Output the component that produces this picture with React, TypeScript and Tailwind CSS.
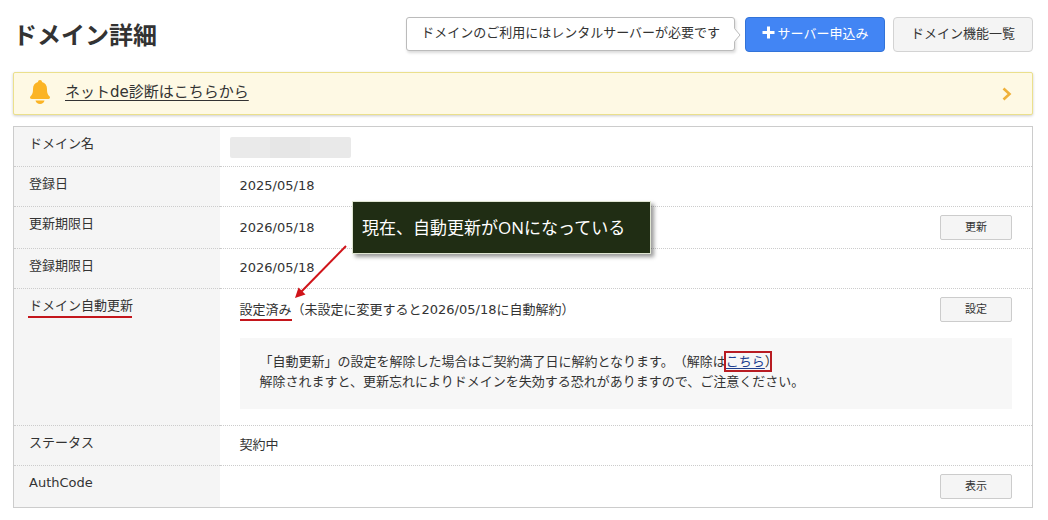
import type { ReactNode } from "react";

type Row = {
  label: string;
  value: ReactNode;
  action?: string;
  marked?: boolean;
  note?: ReactNode;
};

const rows: Row[] = [
  { label: "ドメイン名", value: <MaskedName /> },
  { label: "登録日", value: "2025/05/18" },
  { label: "更新期限日", value: "2026/05/18", action: "更新" },
  { label: "登録期限日", value: "2026/05/18" },
  {
    label: "ドメイン自動更新",
    marked: true,
    value: (
      <>
        <span className="relative after:absolute after:inset-x-0 after:-bottom-1 after:h-0.5 after:bg-[#c4161c]">設定済み</span>
        （未設定に変更すると2026/05/18に自動解約）
      </>
    ),
    action: "設定",
    note: <RenewalNote />,
  },
  { label: "ステータス", value: "契約中" },
  { label: "AuthCode", value: "", action: "表示" },
];

export default function App() {
  return (
    <main className="pl-[13px] pr-[15px] pt-[17px] pb-3 bg-white text-[#333] text-[13px] leading-5 font-['DejaVu_Sans','Noto_Sans_CJK_JP',sans-serif] [text-spacing-trim:space-all]">
      <PageHeader />
      <Notice />
      <div className="relative mt-[11px]">
        <DomainTable />
        <Callout />
      </div>
    </main>
  );
}

function PageHeader() {
  return (
    <header className="flex items-start justify-between">
      <h1 className="text-[24px] leading-[38px] font-bold">ドメイン詳細</h1>
      <div className="flex items-start">
        <p className="relative mr-[10px] h-[34px] px-[14px] pt-[5px] bg-white border border-[#bbb] rounded-[3px] shadow-[1px_2px_3px_rgba(0,0,0,0.15)]">
          ドメインのご利用にはレンタルサーバーが必要です
          <svg className="absolute top-[10px] -right-[7px]" width="7" height="14" viewBox="0 0 7 14" aria-hidden="true">
            <path d="M0 0L6 7L0 14Z" fill="#fff" />
            <path d="M0.5 0.5L6 7L0.5 13.5" fill="none" stroke="#bbb" />
          </svg>
        </p>
        <button className="flex items-center justify-center gap-[3px] w-[140px] h-[35px] mr-2 pb-0.5 bg-[#4285f4] border border-[#3273d8] rounded-sm text-white cursor-pointer">
          <svg className="mb-0.5" width="13" height="13" viewBox="0 0 13 13" fill="#fff" aria-hidden="true">
            <path d="M5 0.5H8V5H12.5V8H8V12.5H5V8H0.5V5H5Z" />
          </svg>
          サーバー申込み
        </button>
        <button className="w-[140px] h-[35px] pb-0.5 bg-[#f4f4f4] border border-[#d3d3d3] rounded-sm cursor-pointer">
          ドメイン機能一覧
        </button>
      </div>
    </header>
  );
}

function Notice() {
  return (
    <div className="flex items-center mt-[17px] h-[43px] pl-[15px] pr-5 pb-[3px] bg-[#fef9e4] border border-[#ebe08c] rounded-[2px] shadow-[0_1px_3px_rgba(0,0,0,0.2)]">
      <svg width="22" height="24" viewBox="0 0 22 24" fill="#fbb425" aria-hidden="true">
        <path d="M11 0C12.2 0 13 .8 13 2C16.3 2.9 18 5.5 18 9C18 13.3 18.9 14.7 20.2 16C21.7 17.4 21 19 19 19H3C1 19 .3 17.4 1.8 16C3.1 14.7 4 13.3 4 9C4 5.5 5.7 2.9 9 2C9 .8 9.8 0 11 0Z" />
        <path d="M6.5 20.5H15.5C15 22.7 13.3 24 11 24S7 22.7 6.5 20.5Z" />
      </svg>
      <a href="#diagnosis" className="ml-[14px] text-[15px] leading-5 underline underline-offset-[3px]">
        ネットde診断はこちらから
      </a>
      <svg className="ml-auto mt-1" width="10" height="14" viewBox="0 0 10 14" fill="none" aria-hidden="true">
        <path d="M1.5 1.5L7.5 7L1.5 12.5" stroke="#efb13a" strokeWidth="2.6" />
      </svg>
    </div>
  );
}

function DomainTable() {
  return (
    <table className="w-full border-collapse border border-[#ccc]">
      <tbody>
        {rows.map((row) => (
          <tr key={row.label} className="border-t border-dotted border-[#ccc] first:border-solid">
            <th scope="row" className="w-[206px] pl-[15px] pt-[7px] pb-3 bg-[#f5f5f5] text-left align-top font-normal">
              {row.marked ? (
                <span className="relative after:absolute after:-left-px after:right-px after:-bottom-[5px] after:h-0.5 after:bg-[#c4161c]">{row.label}</span>
              ) : (
                row.label
              )}
            </th>
            <td className="py-2 px-5 align-top">
              <div className="flex items-center justify-between min-h-[21px]">
                <div>{row.value}</div>
                {row.action && (
                  <button className="w-[72px] h-[25px] bg-[#f5f5f5] border border-[#ccc] rounded-[2px] text-[11px] leading-4 cursor-pointer">
                    {row.action}
                  </button>
                )}
              </div>
              {row.note}
            </td>
          </tr>
        ))}
      </tbody>
    </table>
  );
}

function MaskedName() {
  return (
    <div className="flex -ml-[10px] mt-0.5 h-[21px] rounded-[2px] overflow-hidden" aria-hidden="true">
      <span className="w-10 bg-[#eaeaea]" />
      <span className="w-10 bg-[#e6e6e6]" />
      <span className="w-[41px] bg-[#e9e9e9]" />
    </div>
  );
}

function RenewalNote() {
  return (
    <div className="mt-4 mb-2 px-5 pt-[14px] pb-[17px] bg-[#f7f7f7]">
      <p>
        「自動更新」の設定を解除した場合はご契約満了日に解約となります。（解除は
        <span className="relative after:absolute after:-left-[2px] after:-right-[7px] after:-top-[3px] after:-bottom-[3px] after:border-2 after:border-[#b81c22] after:pointer-events-none">
          <a href="#cancel" className="text-[#1f3f8f] underline underline-offset-2">こちら</a>
        </span>
        ）
      </p>
      <p>解除されますと、更新忘れによりドメインを失効する恐れがありますので、ご注意ください。</p>
    </div>
  );
}

// Annotation floating over the table, with an arrow to the auto-renewal value
function Callout() {
  return (
    <>
      <svg className="absolute left-[280px] top-[118px]" width="56" height="56" viewBox="0 0 56 56" aria-hidden="true">
        <path d="M53 2L8 48" stroke="#d0141a" strokeWidth="2" fill="none" />
        <path d="M2 54L5.5 43.5L12.5 50.5Z" fill="#d0141a" />
      </svg>
      <div className="absolute left-[339px] top-[75px] w-[299px] h-[53px] px-[9px] flex items-center bg-[#202d14] border border-[#dfe5d2] text-white text-[17px] leading-6 shadow-[3px_3px_4px_rgba(0,0,0,0.4)] font-['Open_Sans','Noto_Sans_CJK_JP',sans-serif]">
        現在、自動更新がONになっている
      </div>
    </>
  );
}
